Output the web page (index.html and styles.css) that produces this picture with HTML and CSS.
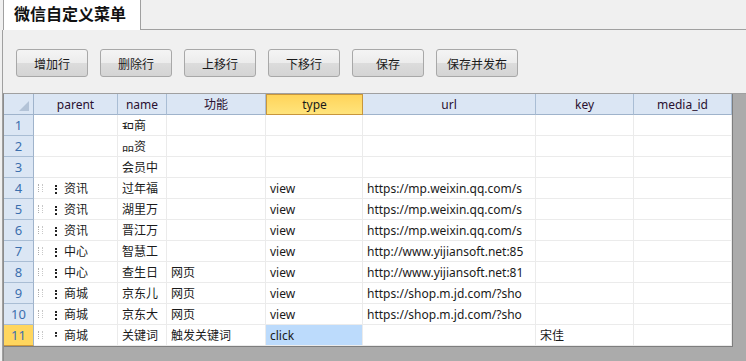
FILE: index.html
```html
<!DOCTYPE html>
<html>
<head>
<meta charset="utf-8">
<link rel="stylesheet" href="styles.css">
</head>
<body>
<div class="tabbar">
  <div class="tab">微信自定义菜单</div>
  <div class="tabline"></div>
</div>
<div class="panel">
  <div class="toolbar">
    <button class="btn">增加行</button>
    <button class="btn">删除行</button>
    <button class="btn">上移行</button>
    <button class="btn">下移行</button>
    <button class="btn">保存</button>
    <button class="btn wide">保存并发布</button>
  </div>
  <div class="gridwrap">
    <div class="grid">
      <div class="hc corner"><span class="tri"></span></div>
      <div class="hc">parent</div>
      <div class="hc">name</div>
      <div class="hc">功能</div>
      <div class="hc sel">type</div>
      <div class="hc">url</div>
      <div class="hc">key</div>
      <div class="hc">media_id</div>

      <div class="rn">1</div><div class="c"></div><div class="c"><span class="clip">积</span>商</div><div class="c"></div><div class="c"></div><div class="c"></div><div class="c"></div><div class="c"></div>
      <div class="rn">2</div><div class="c"></div><div class="c"><span class="clip2">品</span>资</div><div class="c"></div><div class="c"></div><div class="c"></div><div class="c"></div><div class="c"></div>
      <div class="rn">3</div><div class="c"></div><div class="c">会员中</div><div class="c"></div><div class="c"></div><div class="c"></div><div class="c"></div><div class="c"></div>
      <div class="rn">4</div><div class="c"><span class="g1"></span><span class="g2"></span>资讯</div><div class="c">过年福</div><div class="c"></div><div class="c">view</div><div class="c">https://mp.weixin.qq.com/s</div><div class="c"></div><div class="c"></div>
      <div class="rn">5</div><div class="c"><span class="g1"></span><span class="g2"></span>资讯</div><div class="c">湖里万</div><div class="c"></div><div class="c">view</div><div class="c">https://mp.weixin.qq.com/s</div><div class="c"></div><div class="c"></div>
      <div class="rn">6</div><div class="c"><span class="g1"></span><span class="g2"></span>资讯</div><div class="c">晋江万</div><div class="c"></div><div class="c">view</div><div class="c">https://mp.weixin.qq.com/s</div><div class="c"></div><div class="c"></div>
      <div class="rn">7</div><div class="c"><span class="g1"></span><span class="g2"></span>中心</div><div class="c">智慧工</div><div class="c"></div><div class="c">view</div><div class="c">http://www.yijiansoft.net:85</div><div class="c"></div><div class="c"></div>
      <div class="rn">8</div><div class="c"><span class="g1"></span><span class="g2"></span>中心</div><div class="c">查生日</div><div class="c">网页</div><div class="c">view</div><div class="c">http://www.yijiansoft.net:81</div><div class="c"></div><div class="c"></div>
      <div class="rn">9</div><div class="c"><span class="g1"></span><span class="g2"></span>商城</div><div class="c">京东儿</div><div class="c">网页</div><div class="c">view</div><div class="c">https://shop.m.jd.com/?sho</div><div class="c"></div><div class="c"></div>
      <div class="rn">10</div><div class="c"><span class="g1"></span><span class="g2"></span>商城</div><div class="c">京东大</div><div class="c">网页</div><div class="c">view</div><div class="c">https://shop.m.jd.com/?sho</div><div class="c"></div><div class="c"></div>
      <div class="rn selrow">11</div><div class="c"><span class="g1"></span><span class="g2 short"></span>商城</div><div class="c">关键词</div><div class="c">触发关键词</div><div class="c active">click</div><div class="c"></div><div class="c">宋佳</div><div class="c"></div>
    </div>
  </div>
</div>
</body>
</html>
```

FILE: styles.css
```css
html, body {
  margin: 0;
  padding: 0;
  background: #f0f0f0;
  font-family: "Noto Sans", "Noto Sans CJK SC", sans-serif;
  font-size: 12px;
  color: #1a1a1a;
  overflow: hidden;
  height: 361px;
}

.tabbar {
  display: flex;
  height: 30px;
}

.tab {
  margin-left: 3px;
  width: 138px;
  height: 30px;
  box-sizing: border-box;
  background: #fff;
  border-left: 1px solid #a0a0a0;
  border-right: 1px solid #a0a0a0;
  font-family: "Noto Sans CJK SC", sans-serif;
  font-weight: bold;
  font-size: 16px;
  line-height: 26px;
  padding-left: 10px;
  color: #111;
}

.tabline {
  flex: 1;
  border-bottom: 1px solid #a0a0a0;
  height: 29px;
}

.panel {
  margin-left: 2px;
  border-left: 1px solid #a0a0a0;
  height: 331px;
  display: flex;
  flex-direction: column;
}

.toolbar {
  display: flex;
  gap: 12px;
  padding: 19px 0 0 13px;
  height: 28px;
}

.btn {
  width: 72px;
  height: 28px;
  margin: 0;
  padding: 0;
  border: 1px solid #a8a8a8;
  border-radius: 3px;
  background: linear-gradient(#f4f4f4, #ececec 50%, #dcdcdc 51%, #d4d4d4);
  font-family: "Noto Sans CJK SC", sans-serif;
  font-size: 12px;
  color: #1a1a1a;
}

.btn.wide {
  width: 82px;
}

.gridwrap {
  margin-top: 16px;
  flex: 1;
  background: #ababab;
  border-left: 1px solid #8c8c8c;
  border-top: 1px solid #a0a0a0;
}

.grid {
  display: grid;
  grid-template-columns: 30px 84px 49px 99px 97px 173px 98px 98px;
  grid-auto-rows: 21px;
  width: 728px;
  background: #fff;
  border-right: 1px solid #7e7e7e;
  border-bottom: 1px solid #7e7e7e;
}

.hc {
  box-sizing: border-box;
  background: #dbe6f4;
  border-right: 1px solid #a9bdd4;
  border-bottom: 1px solid #9fb3cb;
  display: flex;
  align-items: center;
  justify-content: center;
  color: #2a1030;
  white-space: nowrap;
  overflow: hidden;
}

.hc.corner {
  position: relative;
  border-right-color: #9fb3cb;
}

.tri {
  position: absolute;
  right: 4px;
  bottom: 3px;
  width: 0;
  height: 0;
  border-left: 10px solid transparent;
  border-bottom: 10px solid #b3c3d7;
}

.hc.sel {
  background: linear-gradient(#ffd45a, #ffe47c);
  border: 1px solid #c8963c;
  color: #1a1a1a;
}

.rn {
  box-sizing: border-box;
  background: #dbe6f4;
  border-right: 1px solid #9fb3cb;
  border-bottom: 1px solid #a9bdd4;
  display: flex;
  align-items: center;
  justify-content: center;
  color: #3b6fae;
  font-size: 13px;
}

.rn.selrow {
  background: #ffd65e;
  border-bottom: 1px solid #d09a3a;
  color: #3b6fae;
}

.c {
  box-sizing: border-box;
  border-right: 1px solid #ebebeb;
  border-bottom: 1px solid #ebebeb;
  display: flex;
  align-items: center;
  padding-left: 4px;
  white-space: nowrap;
  overflow: hidden;
  font-family: "Noto Sans", "Noto Sans CJK SC", sans-serif;
  font-size: 12px;
  color: #1a1a1a;
}

.c.active {
  background: #bcdbfc;
}

.g1 {
  display: inline-block;
  width: 3px;
  height: 8px;
  margin-left: 0;
  margin-right: 12px;
  border-left: 1px dotted #b0b0b0;
  border-right: 1px dotted #c8c8c8;
}

.g2 {
  display: inline-block;
  width: 0;
  height: 9px;
  margin-top: 2px;
  margin-right: 7px;
  border-left: 2px dotted #222;
}

.g2.short {
  height: 5px;
  margin-top: -2px;
}

.clip {
  display: inline-block;
  clip-path: inset(0 0 45% 0);
  transform: translateY(3px);
}

.clip2 {
  display: inline-block;
  clip-path: inset(45% 0 0 0);
}
```
